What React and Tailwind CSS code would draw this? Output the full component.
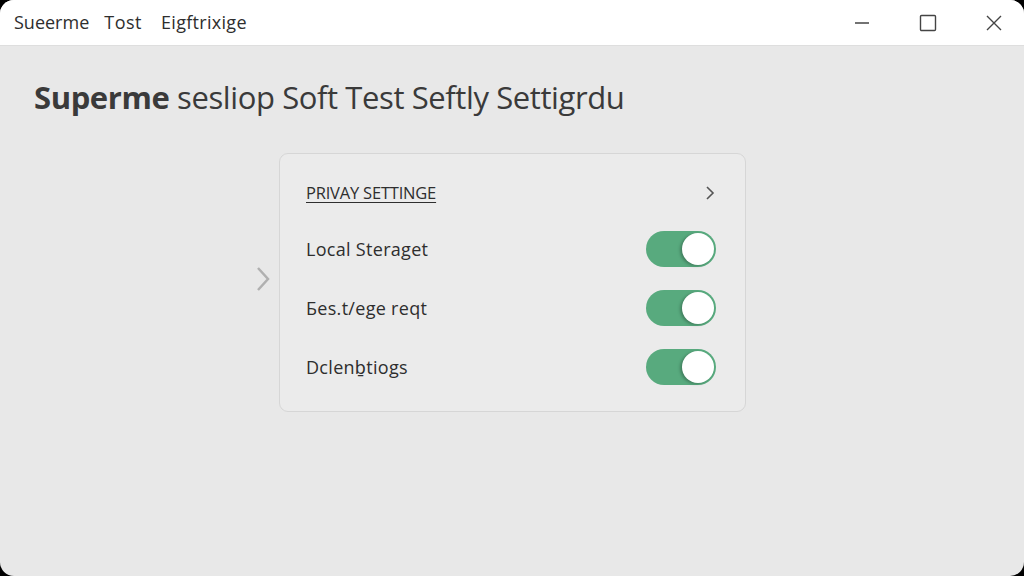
import React, { useState } from 'react';

const font = { fontFamily: '"Open Sans", "Noto Sans", sans-serif' };

function Toggle({ on, onChange }) {
  return (
    <button
      onClick={onChange}
      className={`flex items-center w-[70px] h-[36px] rounded-full p-[2px] ${on ? 'bg-[#58aa7e] justify-end' : 'bg-[#c8c8c8] justify-start'}`}
    >
      <span className="block w-[32px] h-[32px] rounded-full bg-white shadow-[-2px_1px_3px_rgba(0,0,0,0.25)]" />
    </button>
  );
}

function App() {
  const [toggles, setToggles] = useState([true, true, true]);
  const rows = ['Local Steraget', 'Бes.t/ege reqt', 'Dclenb\u0331tiogs'];

  const flip = (i) => setToggles((t) => t.map((v, j) => (j === i ? !v : v)));

  return (
    <div className="w-[1024px] h-[576px] bg-black" style={font}>
      <div className="w-full h-full rounded-[14px] overflow-hidden flex flex-col bg-[#e8e8e8]">
        {/* title bar */}
        <div className="h-[46px] bg-white flex items-center border-b border-[#dedede] shrink-0">
          <div className="flex items-center pl-[14px] text-[18px] text-[#2e2e2e]">
            <span>Sueerme</span>
            <span className="ml-[15px] tracking-[0.5px]">Tost</span>
            <span className="ml-[19px] tracking-[0.3px]">Eigftrixige</span>
          </div>
          <div className="ml-auto mr-[-3px] flex items-center text-[#444]">
            <div className="w-[66px] flex justify-center">
              <svg width="16" height="16" viewBox="0 0 16 16"><path d="M1 8h14" stroke="currentColor" strokeWidth="1.4" /></svg>
            </div>
            <div className="w-[66px] flex justify-center">
              <svg width="18" height="18" viewBox="0 0 18 18"><rect x="1.5" y="1.5" width="15" height="15" rx="1" fill="none" stroke="currentColor" strokeWidth="1.4" /></svg>
            </div>
            <div className="w-[66px] flex justify-center">
              <svg width="16" height="16" viewBox="0 0 16 16"><path d="M1 1l14 14M15 1L1 15" stroke="currentColor" strokeWidth="1.4" /></svg>
            </div>
          </div>
        </div>

        {/* content */}
        <div className="flex-1 flex flex-col">
          <h1 className="pl-[34px] pt-[30px] text-[31px] leading-[42px] text-[#3a3a3a] tracking-[-0.4px]">
            <span className="font-bold">Superme</span> sesliop Soft Test Seftly Settigrdu
          </h1>

          <div className="flex items-center mt-[35px] ml-[254px]">
            <svg width="18" height="28" viewBox="0 0 18 28" className="text-[#b0b0b0] mr-[7px] mb-[8px]">
              <path d="M4 3l10 11L4 25" fill="none" stroke="currentColor" strokeWidth="2.5" />
            </svg>
            <div className="w-[467px] h-[259px] rounded-[9px] border border-[#d6d6d6] bg-[#ebebeb] pl-[26px] pr-[29px] pt-[24px] flex flex-col">
              <div className="flex items-center h-[30px] justify-between">
                <span className="text-[16.5px] text-[#2e2e2e] underline underline-offset-[3px] tracking-[-0.2px]">PRIVAY SETTINGE</span>
                <svg width="12" height="16" viewBox="0 0 12 16" className="text-[#555]">
                  <path d="M3 2l6 6-6 6" fill="none" stroke="currentColor" strokeWidth="1.6" />
                </svg>
              </div>
              {rows.map((r, i) => (
                <div key={r} className="flex items-center justify-between h-[36px] mt-[23px]">
                  <span className="text-[18px] text-[#2e2e2e] tracking-[0.3px]">{r}</span>
                  <Toggle on={toggles[i]} onChange={() => flip(i)} />
                </div>
              ))}
            </div>
          </div>
        </div>
      </div>
    </div>
  );
}

export default App;
